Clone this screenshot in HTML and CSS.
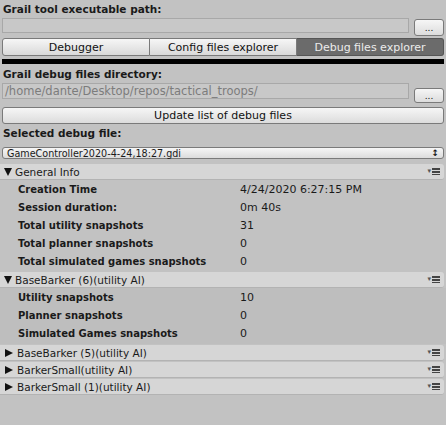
FILE: index.html
```html
<!DOCTYPE html>
<html lang="en">
<head>
    <meta charset="UTF-8">
    <title>Grail Debugger</title>
    <link rel="stylesheet" href="styles.css">
</head>
<body>
    <div class="window">
        <div class="label">Grail tool executable path:</div>
        <div class="path-row">
            <div class="field"></div>
            <button class="btn small-btn">...</button>
        </div>

        <div class="tabs">
            <button class="tab">Debugger</button>
            <button class="tab">Config files explorer</button>
            <button class="tab active">Debug files explorer</button>
        </div>
        <div class="separator"></div>

        <div class="label">Grail debug files directory:</div>
        <div class="path-row dir-row">
            <div class="field tall">/home/dante/Desktop/repos/tactical_troops/</div>
            <button class="btn small-btn">...</button>
        </div>
        <button class="btn wide-btn">Update list of debug files</button>

        <div class="label file-label">Selected debug file:</div>
        <div class="popup">
            <span>GameController2020-4-24,18:27.gdi</span>
            <span class="arrows">&#8597;</span>
        </div>

        <div class="foldout first">
            <div class="foldout-header">
                <span class="tri down"></span>General Info
                <span class="menu-icon"><span class="caret">&#9662;</span><span class="bars"></span></span>
            </div>
            <div class="foldout-body">
                <div class="row"><span class="key">Creation Time</span><span class="val">4/24/2020 6:27:15 PM</span></div>
                <div class="row"><span class="key">Session duration:</span><span class="val">0m 40s</span></div>
                <div class="row"><span class="key">Total utility snapshots</span><span class="val">31</span></div>
                <div class="row"><span class="key">Total planner snapshots</span><span class="val">0</span></div>
                <div class="row"><span class="key">Total simulated games snapshots</span><span class="val">0</span></div>
            </div>
        </div>

        <div class="foldout">
            <div class="foldout-header">
                <span class="tri down"></span>BaseBarker (6)(utility AI)
                <span class="menu-icon"><span class="caret">&#9662;</span><span class="bars"></span></span>
            </div>
            <div class="foldout-body shaded">
                <div class="row"><span class="key">Utility snapshots</span><span class="val">10</span></div>
                <div class="row"><span class="key">Planner snapshots</span><span class="val">0</span></div>
                <div class="row"><span class="key">Simulated Games snapshots</span><span class="val">0</span></div>
            </div>
        </div>

        <div class="foldout">
            <div class="foldout-header">
                <span class="tri right"></span>BaseBarker (5)(utility AI)
                <span class="menu-icon"><span class="caret">&#9662;</span><span class="bars"></span></span>
            </div>
        </div>
        <div class="foldout">
            <div class="foldout-header">
                <span class="tri right"></span>BarkerSmall(utility AI)
                <span class="menu-icon"><span class="caret">&#9662;</span><span class="bars"></span></span>
            </div>
        </div>
        <div class="foldout">
            <div class="foldout-header">
                <span class="tri right"></span>BarkerSmall (1)(utility AI)
                <span class="menu-icon"><span class="caret">&#9662;</span><span class="bars"></span></span>
            </div>
        </div>
    </div>
</body>
</html>
```

FILE: styles.css
```css
* {
    box-sizing: border-box;
}

body, html {
    margin: 0;
    padding: 0;
    background-color: #c2c2c2;
    color: #1a1a1a;
    font-family: 'DejaVu Sans', sans-serif;
    font-size: 11px;
    height: 100%;
    overflow: hidden;
}

.window {
    display: flex;
    flex-direction: column;
    padding: 2px 2px 0 2px;
}

.label {
    font-weight: bold;
    font-size: 10.5px;
    height: 14px;
    line-height: 14px;
    padding-left: 1px;
}

.path-row {
    display: flex;
    align-items: flex-start;
    gap: 5px;
    margin-top: 2px;
}

.field {
    flex: 1;
    height: 15px;
    background-color: #c8c8c8;
    border: 1px solid #a8a8a8;
    color: #7c7c7c;
    font-size: 11.5px;
    line-height: 13px;
    padding-left: 2px;
    white-space: nowrap;
    overflow: hidden;
}

.field.tall {
    height: 16px;
    line-height: 14px;
}

.btn {
    font-family: 'DejaVu Sans', sans-serif;
    font-size: 11px;
    color: #111;
    background: linear-gradient(#f6f6f6, #dcdcdc);
    border: 1px solid #7a7a7a;
    border-radius: 3px;
    padding: 0;
    margin: 0;
}

.small-btn {
    width: 30px;
    height: 17px;
    margin-top: 1px;
    font-size: 9px;
    line-height: 12px;
}

.dir-row .small-btn {
    height: 15px;
    margin-top: 5px;
    line-height: 10px;
}

.tabs {
    display: flex;
    margin-top: 2px;
    height: 18px;
}

.tab {
    flex: 1;
    font-family: 'DejaVu Sans', sans-serif;
    font-size: 11px;
    color: #111;
    background: linear-gradient(#f6f6f6, #d9d9d9);
    border: 1px solid #7a7a7a;
    border-left: none;
    padding: 0;
    margin: 0;
}

.tab:first-child {
    border-left: 1px solid #7a7a7a;
    border-radius: 3px 0 0 3px;
}

.tab:last-child {
    border-radius: 0 3px 3px 0;
}

.tab.active {
    background: #6b6b6b;
    color: #ececec;
    border-color: #555;
}

.separator {
    height: 5px;
    background-color: #000;
    margin-top: 3px;
    margin-bottom: 3px;
}

.wide-btn {
    height: 17px;
    margin-top: 4px;
}

.file-label {
    margin-top: 2px;
}

.popup {
    display: flex;
    justify-content: space-between;
    align-items: center;
    height: 12px;
    margin-top: 7px;
    padding: 0 4px;
    font-size: 9.6px;
    background: linear-gradient(#f6f6f6, #dcdcdc);
    border: 1px solid #7a7a7a;
    border-radius: 3px;
}

.arrows {
    font-size: 9px;
    font-weight: bold;
}

.foldout {
    margin-top: 1px;
}

.foldout.first {
    margin-top: 5px;
}

.foldout-header {
    position: relative;
    display: flex;
    align-items: center;
    height: 16px;
    background-color: #d6d6d6;
    border-radius: 0 3px 3px 0;
    margin-left: -2px;
    padding-left: 4px;
    font-size: 10.5px;
    border-bottom: 1px solid #b3b3b3;
}

/* disclosure triangles */
.tri {
    width: 0;
    height: 0;
    margin-right: 3px;
}

.tri.down {
    border-left: 4.5px solid transparent;
    border-right: 4.5px solid transparent;
    border-top: 8px solid #111;
}

.tri.right {
    margin-left: 1px;
    margin-right: 4px;
    border-top: 4.5px solid transparent;
    border-bottom: 4.5px solid transparent;
    border-left: 8px solid #111;
}

.menu-icon {
    position: absolute;
    right: 4px;
    top: 4px;
    display: flex;
    align-items: center;
    gap: 1px;
}

.caret {
    font-size: 7px;
    line-height: 7px;
    color: #555;
}

.bars {
    width: 8px;
    height: 7px;
    background: repeating-linear-gradient(#444 0 2px, transparent 2px 3px);
}

.foldout-body {
    padding: 1px 0 0 0;
    margin-left: -2px;
    margin-right: -2px;
}

.foldout-body.shaded {
    background-color: #bebebe;
    padding-bottom: 1px;
}

.row {
    display: flex;
    height: 18px;
    line-height: 18px;
}

.key {
    width: 240px;
    padding-left: 18px;
    font-weight: bold;
    font-size: 10px;
}

.val {
    font-size: 11px;
}
```
